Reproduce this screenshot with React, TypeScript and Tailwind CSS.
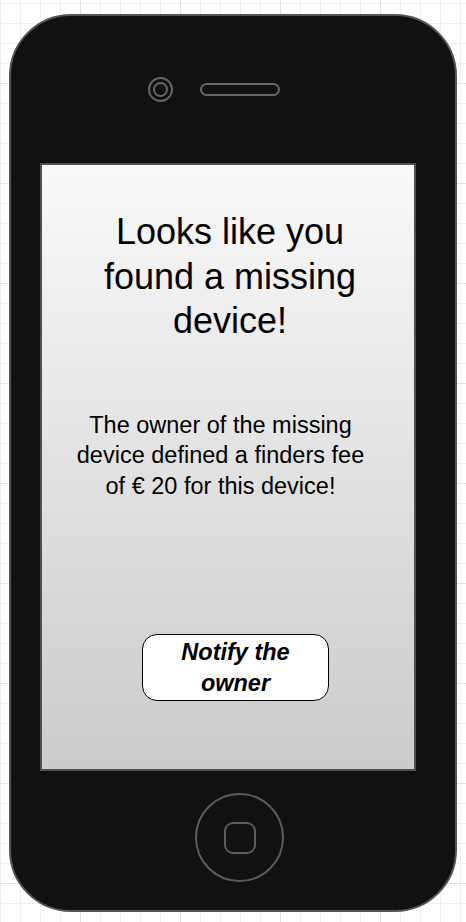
export default function App() {
  return (
    <div className="w-[466px] h-[922px] pt-[14px] pl-[9px] bg-white bg-[linear-gradient(to_right,#e2e2e2_1px,transparent_1px),linear-gradient(to_bottom,#e2e2e2_1px,transparent_1px),linear-gradient(to_right,#eeeeee_1px,transparent_1px),linear-gradient(to_bottom,#eeeeee_1px,transparent_1px)] bg-[size:100px_100px,100px_100px,20px_20px,20px_20px] bg-[position:80px_83px,80px_83px,0_3px,0_3px] font-['Liberation_Sans',Arial,sans-serif]">
      {/* Phone body */}
      <div className="w-[448px] h-[898px] rounded-[62px] bg-[#111111] border-2 border-[#555555] flex flex-col">
        {/* Camera + speaker */}
        <div className="h-[147px] pt-[61px] pl-[137px] flex items-start gap-[27px]">
          <div className="w-[25px] h-[25px] rounded-full border-2 border-[#666666] flex items-center justify-center">
            <div className="w-[15px] h-[15px] rounded-full border-2 border-[#666666]" />
          </div>
          <div className="mt-[6px] w-[80px] h-[13px] rounded-full border-2 border-[#666666]" />
        </div>

        {/* Screen */}
        <div className="ml-[29px] w-[376px] h-[608px] border-2 border-[#4f4f4f] bg-linear-to-b from-[#f9f9f9] to-[#cbcbcb] flex flex-col items-center text-black">
          <h1 className="mt-[45px] pl-[4px] text-[36px] leading-[44.5px] text-center font-normal">
            Looks like you
            <br />
            found a missing
            <br />
            device!
          </h1>
          <p className="mt-[66px] pr-[15px] text-[23.5px] leading-[30.5px] text-center">
            The owner of the missing
            <br />
            device defined a finders fee
            <br />
            of € 20 for this device!
          </p>
          <div className="mt-[133px] ml-[15px]">
            <button className="w-[187px] h-[67px] rounded-[15px] border border-black bg-white flex items-center justify-center text-[23.5px] leading-[31px] font-bold italic text-center">
              Notify the
              <br />
              owner
            </button>
          </div>
        </div>

        {/* Home button */}
        <div className="mt-[22px] ml-[184px] w-[89px] h-[89px] rounded-full border-2 border-[#5c5c5c] flex items-center justify-center">
          <div className="w-[32px] h-[32px] rounded-[9px] border-2 border-[#5c5c5c]" />
        </div>
      </div>
    </div>
  );
}
